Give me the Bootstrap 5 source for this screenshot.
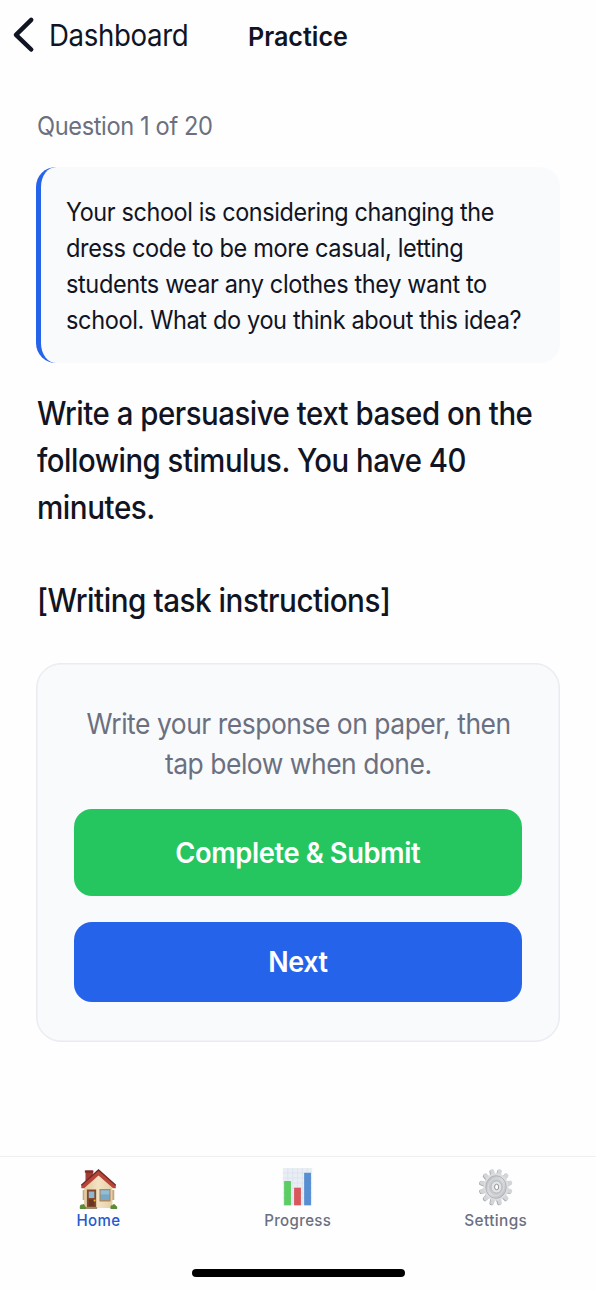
<!doctype html>
<html lang="en">
<head>
<meta charset="utf-8">
<meta name="viewport" content="width=device-width, initial-scale=1">
<title>Practice</title>
<link href="https://cdn.jsdelivr.net/npm/bootstrap@5.3.0/dist/css/bootstrap.min.css" rel="stylesheet">
<style>
:root { --ink:#111423; --muted:#6b7080; --blue:#2563eb; --green:#25c660; --panel:#f9fafc; --line:#e9ebf0; }
body { font-family: Inter, "Liberation Sans", sans-serif; color: var(--ink); background: #fefefe; }
.screen { height: 1290px; overflow: hidden; }
/* narrow text line, scaled from its left edge unless centred */
.tl { display: block; width: max-content; white-space: nowrap; transform: scaleX(var(--k, .95)); transform-origin: 0 50%; }
.tc { margin-inline: auto; transform-origin: 50% 50%; }
.top-bar { height: 72px; display: grid; grid-template-columns: 248px 1fr; padding-top: 15px; line-height: 40px; }
.back-link { color: var(--ink); padding-left: 12px; }
.back-link .tl { --k: .922; font-size: 30px; letter-spacing: -.4px; margin-left: 14px; }
.page-title { font-size: 26px; font-weight: 600; line-height: 43px; }
.page-title .tl { --k: .966; }
.content { padding: 36px 36px 0; }
.counter { font-size: 25px; letter-spacing: -.4px; line-height: 36px; color: var(--muted); margin-bottom: 23px; }
.counter .tl { --k: .945; margin-left: .5px; }
.stimulus { background: var(--panel); border-left: 5px solid var(--blue); border-radius: 20px; padding: 26.5px 20px 25.5px 24.5px; font-size: 25px; letter-spacing: -.4px; line-height: 36px; margin-bottom: 28px; }
.stimulus .tl:nth-child(1) { --k: .936; }
.stimulus .tl:nth-child(2) { --k: .943; }
.stimulus .tl:nth-child(3) { --k: .941; }
.stimulus .tl:nth-child(4) { --k: .942; }
.prompt { font-size: 32px; font-weight: 500; letter-spacing: -.5px; line-height: 46.8px; margin-bottom: 38.4px; padding-left: .5px; }
.prompt .tl { --k: .918; min-height: 46.8px; }
.prompt .tl:nth-child(2) { --k: .915; }
.prompt .tl:nth-child(n+3) { --k: .926; }
.answer { background: var(--panel); border: 1px solid var(--line); box-shadow: inset 0 0 0 .5px var(--line); border-radius: 25px; padding: 39.5px 37px 38px; height: 379px; }
.hint { font-size: 28px; letter-spacing: -.5px; line-height: 40px; color: var(--muted); margin-bottom: 25.5px; }
.hint .tl { --k: .944; }
.action { display: block; width: 100%; border: 0; border-radius: 18px; color: #fff; font-size: 28px; letter-spacing: -.4px; padding: 1px 0 0; line-height: 1.5; }
.action:hover { color: #fff; }
.submit { height: 87px; background: var(--green); font-weight: 600; margin-bottom: 25.5px; }
.submit .tl { --k: .974; }
.next { height: 80px; background: var(--blue); font-weight: 600; }
.next .tl { --k: .96; }
.tab-bar { height: 134px; border-top: 1px solid #efeff1; background: #fefefe; }
.tab { color: var(--muted); font-size: 16px; font-weight: 500; line-height: 21px; padding: 10px 1px 0 0; letter-spacing: .4px; }
.tab.active { color: #2459cf; }
.tab svg { display: block; margin: 0 auto; }
.tab .tl { --k: .94; }
.tab:last-child .tl { --k: .96; }
.home-bar { width: 213px; height: 8px; border-radius: 4px; background: #000; margin: 38px auto 0; }
</style>
</head>
<body>
<div class="screen d-flex flex-column">
  <header class="top-bar">
    <a class="back-link d-flex text-decoration-none" href="#">
      <svg width="23" height="40" viewBox="0 0 23 40"><path d="M19.2 4.900 4 19.800l15.200 14.700" fill="none" stroke="#111423" stroke-width="4.500" stroke-linecap="round" stroke-linejoin="round"/></svg>
      <span class="tl">Dashboard</span>
    </a>
    <h1 class="page-title mb-0"><span class="tl">Practice</span></h1>
  </header>
  <main class="content flex-grow-1">
    <p class="counter"><span class="tl">Question 1 of 20</span></p>
    <div class="stimulus">
      <span class="tl">Your school is considering changing the</span>
      <span class="tl">dress code to be more casual, letting</span>
      <span class="tl">students wear any clothes they want to</span>
      <span class="tl">school. What do you think about this idea?</span>
    </div>
    <div class="prompt">
      <span class="tl">Write a persuasive text based on the</span>
      <span class="tl">following stimulus. You have 40</span>
      <span class="tl">minutes.</span>
      <span class="tl"></span>
      <span class="tl">[Writing task instructions]</span>
    </div>
    <section class="answer">
      <p class="hint">
        <span class="tl tc">Write your response on paper, then</span>
        <span class="tl tc">tap below when done.</span>
      </p>
      <button class="btn action submit" type="button"><span class="tl tc">Complete &amp; Submit</span></button>
      <button class="btn action next" type="button"><span class="tl tc">Next</span></button>
    </section>
  </main>
  <nav class="tab-bar">
    <div class="row g-0 text-center">
      <a class="col tab active text-decoration-none" href="#">
        <svg width="39" height="43" viewBox="0 0 42 43" preserveAspectRatio="none">
          <defs><linearGradient id="wall" x2="1"><stop stop-color="#e3c99e"/><stop offset=".5" stop-color="#f3e3c3"/><stop offset="1" stop-color="#e5cea4"/></linearGradient></defs>
          <path d="M7 3.500h8v16H7z" fill="#a23b31"/><path d="M6.300 3.500h9.200v2.200H6.300z" fill="#7d2b25"/>
          <path d="M4 23h3v10H4zM35 23h3v10h-3z" fill="#c5a77d"/>
          <path d="M5.500 19 21 6l15 13v22H5.500z" fill="url(#wall)"/>
          <path d="M21 3 2.500 18.200v3.100h3L21 8.400l15.800 12.900h2.800v-3.100z" fill="#b9443a"/>
          <path d="M2.500 18.200 21 3l18.600 15.200" stroke="#6f2a25" stroke-width="1.400" fill="none"/>
          <path d="M8.500 22.500h10V41h-10z" fill="#82492f"/><path d="M10.500 24.500h6v6.500h-6z" fill="#8fb7d3"/><path d="M10.500 32.500h6V39h-6z" fill="#6c3522"/>
          <circle cx="16.800" cy="33.500" r="1.100" fill="#e8b43d"/>
          <path d="M22 22h12v12.500H22z" fill="#a88b66"/><path d="M23.400 23.400h9.200v9.600h-9.200z" fill="#78a8c7"/><path d="M23.400 23.400h9.200v4h-9.200z" fill="#93bdd5"/>
          <path d="M6.500 40h13v2h-13z" fill="#9a8b73"/>
          <path d="M1 42c-.8-3.200.8-5 2.400-4.300C4.500 36 6.500 37.500 6.400 39c1 .2 1.200 2 .7 3zM34 42c-.6-2.500.3-4 1.700-3.600 1-1.900 3.700-1.500 4 .3 1.600.2 1.800 2.300 1.200 3.300z" fill="#5c8b35"/>
        </svg>
        <span class="tl tc">Home</span>
      </a>
      <a class="col tab text-decoration-none" href="#">
        <svg width="41" height="43" viewBox="0 0 42 43" preserveAspectRatio="none">
          <path d="M6 1h30v37.500H6z" fill="#e9edf4"/>
          <path d="M11 1v37M16 1v37M21 1v37M26 1v37M31 1v37M6 6h30M6 11h30M6 16h30M6 21h30M6 26h30M6 31h30" stroke="#d9e0ea" stroke-width=".7"/>
          <path d="M7.300 14h7v24.300h-7z" fill="#5bcd63"/><path d="M17.500 20.700h7v17.600h-7z" fill="#d9565b"/><path d="M27.800 5.800h7v32.500h-7z" fill="#578fd2"/>
        </svg>
        <span class="tl tc">Progress</span>
      </a>
      <a class="col tab text-decoration-none" href="#">
        <svg width="38" height="43" viewBox="0 0 42 43" preserveAspectRatio="none">
          <defs>
            <linearGradient id="steel" x2="1" y2="1"><stop stop-color="#b4b7bb"/><stop offset=".5" stop-color="#dcdde0"/><stop offset="1" stop-color="#b6b9bd"/></linearGradient>
            <path id="tooth" d="M18.500 8 19 2.300q2-1.400 4 0L23.500 8z"/>
            <g id="teeth"><use href="#tooth" transform="rotate(15 21 20)"/><use href="#tooth" transform="rotate(45 21 20)"/><use href="#tooth" transform="rotate(75 21 20)"/><use href="#tooth" transform="rotate(105 21 20)"/><use href="#tooth" transform="rotate(135 21 20)"/><use href="#tooth" transform="rotate(165 21 20)"/><use href="#tooth" transform="rotate(195 21 20)"/><use href="#tooth" transform="rotate(225 21 20)"/><use href="#tooth" transform="rotate(255 21 20)"/><use href="#tooth" transform="rotate(285 21 20)"/><use href="#tooth" transform="rotate(315 21 20)"/><use href="#tooth" transform="rotate(345 21 20)"/></g>
          </defs>
          <use href="#teeth" fill="#9da1a6" transform="translate(-.8 .5)"/>
          <use href="#teeth" fill="#d3d5d8"/>
          <circle cx="21" cy="20" r="13.800" fill="#dcdddf"/>
          <circle cx="21" cy="20" r="11.300" fill="url(#steel)" stroke="#afb2b6" stroke-width="1"/>
          <circle cx="21" cy="20" r="8.500" fill="#c8cacd" stroke="#d8d9dc" stroke-width="1"/>
          <circle cx="21.500" cy="20" r="6" fill="#e3e4e6" stroke="#b0b2b6" stroke-width=".8"/>
          <ellipse cx="21.700" cy="20" rx="2.300" ry="2.800" fill="#fff" stroke="#8d9095" stroke-width="1"/>
        </svg>
        <span class="tl tc">Settings</span>
      </a>
    </div>
    <div class="home-bar"></div>
  </nav>
</div>
<script src="https://cdn.jsdelivr.net/npm/bootstrap@5.3.0/dist/js/bootstrap.bundle.min.js"></script>
</body>
</html>
